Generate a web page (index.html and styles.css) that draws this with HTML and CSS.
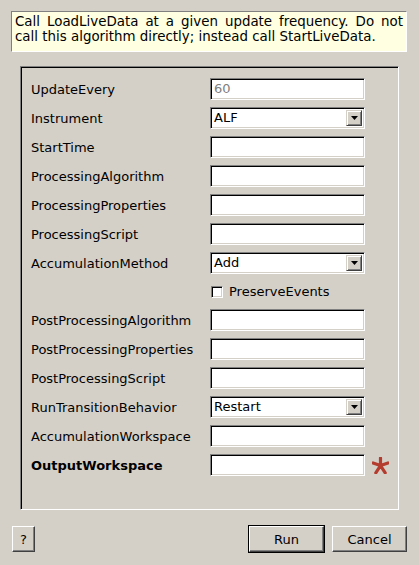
FILE: index.html
```html
<!DOCTYPE html>
<html>
<head>
<meta charset="utf-8">
<link rel="stylesheet" href="styles.css">
</head>
<body>
<div class="dialog">
  <div class="desc">Call LoadLiveData at a given update frequency. Do not call this algorithm directly; instead call StartLiveData.</div>
  <div class="group">
    <div class="grid">
      <div class="label">UpdateEvery</div>
      <div class="field disabled">60</div>
      <div></div>

      <div class="label">Instrument</div>
      <div class="field combo"><span class="val">ALF</span><span class="drop"><svg width="7" height="4" viewBox="0 0 7 4"><path d="M0 0H7L3.5 4Z" fill="#000"/></svg></span></div>
      <div></div>

      <div class="label">StartTime</div>
      <div class="field"></div>
      <div></div>

      <div class="label">ProcessingAlgorithm</div>
      <div class="field"></div>
      <div></div>

      <div class="label">ProcessingProperties</div>
      <div class="field"></div>
      <div></div>

      <div class="label">ProcessingScript</div>
      <div class="field"></div>
      <div></div>

      <div class="label">AccumulationMethod</div>
      <div class="field combo"><span class="val">Add</span><span class="drop"><svg width="7" height="4" viewBox="0 0 7 4"><path d="M0 0H7L3.5 4Z" fill="#000"/></svg></span></div>
      <div></div>

      <div></div>
      <div class="check"><span class="box"></span><span>PreserveEvents</span></div>
      <div></div>

      <div class="label">PostProcessingAlgorithm</div>
      <div class="field"></div>
      <div></div>

      <div class="label">PostProcessingProperties</div>
      <div class="field"></div>
      <div></div>

      <div class="label">PostProcessingScript</div>
      <div class="field"></div>
      <div></div>

      <div class="label">RunTransitionBehavior</div>
      <div class="field combo"><span class="val">Restart</span><span class="drop"><svg width="7" height="4" viewBox="0 0 7 4"><path d="M0 0H7L3.5 4Z" fill="#000"/></svg></span></div>
      <div></div>

      <div class="label">AccumulationWorkspace</div>
      <div class="field"></div>
      <div></div>

      <div class="label bold">OutputWorkspace</div>
      <div class="field"></div>
      <div class="star"><svg width="17" height="17" viewBox="0 0 17 17"><path d="M8.5 1V8.6M1 6L8.5 8.6L16 6M3.8 15.8L8.5 8.6L13.2 15.8" fill="none" stroke="#b43c2e" stroke-width="3.2" stroke-linecap="round" stroke-linejoin="round"/></svg></div>
    </div>
  </div>
  <div class="buttons">
    <div class="btn help">?</div>
    <div class="spacer"></div>
    <div class="btn-default"><div class="btn run">Run</div></div>
    <div class="btn cancel">Cancel</div>
  </div>
</div>
</body>
</html>
```
FILE: styles.css
```css
html, body {
  margin: 0;
  padding: 0;
  background: #d4d0c8;
}
body {
  font-family: "DejaVu Sans", sans-serif;
  font-size: 13px;
  color: #000;
}
.dialog {
  width: 419px;
  height: 565px;
  overflow: hidden;
}
.desc {
  box-sizing: border-box;
  margin: 11px 12px 0 11px;
  height: 41px;
  padding: 2px 3px 0 3px;
  background: #ffffe1;
  border-top: 1px solid #808080;
  border-left: 1px solid #808080;
  border-bottom: 1px solid #ffffff;
  border-right: 1px solid #ffffff;
  text-align: justify;
  line-height: 15px;
  font-size: 13.4px;
}
.group {
  box-sizing: border-box;
  margin: 14px 20px 0 20px;
  height: 444px;
  border-top: 1px solid #808080;
  border-left: 1px solid #808080;
  border-bottom: 1px solid #ffffff;
  border-right: 1px solid #ffffff;
  box-shadow: inset 1px 1px 0 #000;
  padding: 11px 0 0 10px;
}
.grid {
  display: grid;
  grid-template-columns: 179px 155px 1fr;
  grid-template-rows: repeat(7, 22px) 21px repeat(6, 22px);
  row-gap: 7px;
  align-items: center;
}
.label {
  white-space: nowrap;
}
.bold {
  font-weight: bold;
}
.field {
  box-sizing: border-box;
  height: 22px;
  background: #fff;
  border-top: 1px solid #808080;
  border-left: 1px solid #808080;
  border-bottom: 1px solid #ffffff;
  border-right: 1px solid #ffffff;
  box-shadow: inset 1px 1px 0 #000, inset -1px -1px 0 #d4d0c8;
  padding: 0 3px;
  line-height: 20px;
  position: relative;
}
.disabled {
  color: #808080;
}
.combo .val {
  display: block;
}
.combo .drop {
  position: absolute;
  right: 2px;
  top: 2px;
  width: 16px;
  height: 16px;
  box-sizing: border-box;
  background: #d4d0c8;
  border-top: 1px solid #d4d0c8;
  border-left: 1px solid #d4d0c8;
  border-bottom: 1px solid #404040;
  border-right: 1px solid #404040;
  box-shadow: inset 1px 1px 0 #fff, inset -1px -1px 0 #808080;
  display: flex;
  align-items: center;
  justify-content: center;
}
.check {
  display: flex;
  align-items: center;
  gap: 6px;
  padding-left: 1px;
  height: 21px;
}
.check .box {
  box-sizing: border-box;
  width: 12px;
  height: 12px;
  background: #fff;
  border-top: 1px solid #808080;
  border-left: 1px solid #808080;
  border-bottom: 1px solid #ffffff;
  border-right: 1px solid #ffffff;
  box-shadow: inset 1px 1px 0 #000, inset -1px -1px 0 #d4d0c8;
}
.star {
  padding-left: 7px;
  display: flex;
  align-items: center;
  height: 22px;
}
.buttons {
  display: flex;
  align-items: center;
  margin-top: 15px;
  padding: 0 12px 0 12px;
  height: 28px;
}
.spacer {
  flex: 1;
}
.btn {
  box-sizing: border-box;
  background: #d4d0c8;
  border-top: 1px solid #ffffff;
  border-left: 1px solid #ffffff;
  border-bottom: 1px solid #404040;
  border-right: 1px solid #404040;
  box-shadow: inset -1px -1px 0 #808080;
  display: flex;
  align-items: center;
  justify-content: center;
  height: 26px;
}
.help {
  width: 23px;
}
.btn-default {
  border: 1px solid #000;
  margin-right: 7px;
}
.run {
  width: 75px;
}
.cancel {
  width: 75px;
}
```
